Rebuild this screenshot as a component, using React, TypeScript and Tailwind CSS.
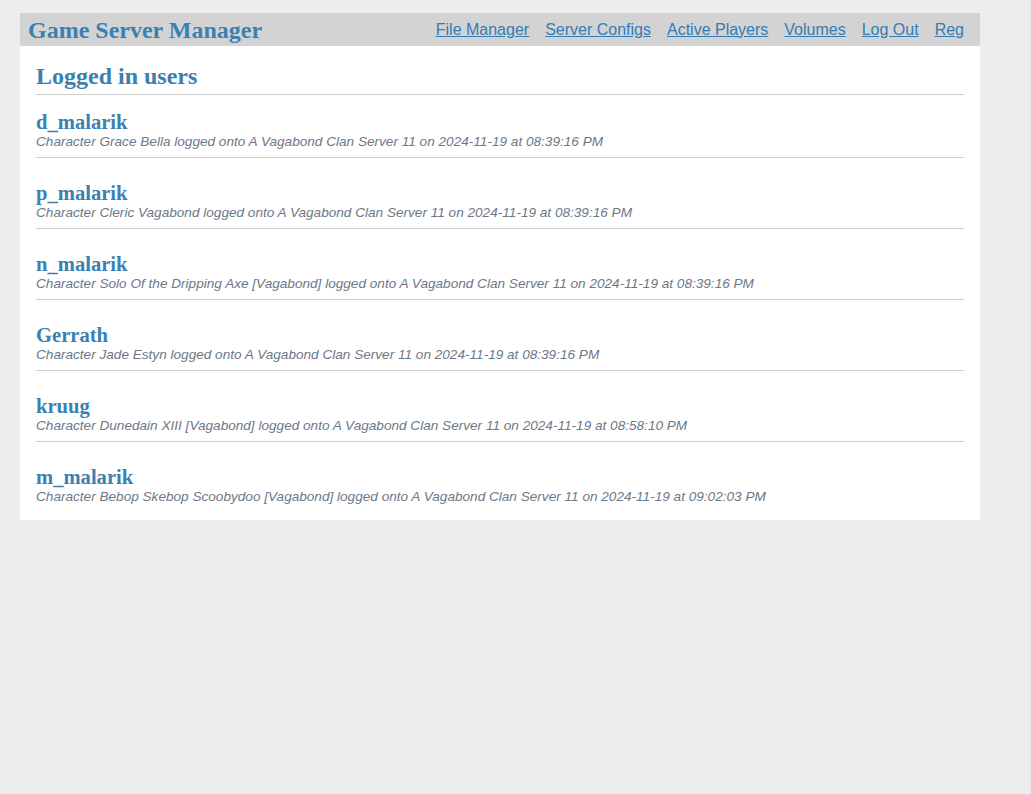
import React from 'react';

const serif = { fontFamily: '"Liberation Serif", "Times New Roman", serif' };

const navLinks = ['File Manager', 'Server Configs', 'Active Players', 'Volumes', 'Log Out', 'Reg'];

const users = [
  { name: 'd_malarik', text: 'Character Grace Bella logged onto A Vagabond Clan Server 11 on 2024-11-19 at 08:39:16 PM' },
  { name: 'p_malarik', text: 'Character Cleric Vagabond logged onto A Vagabond Clan Server 11 on 2024-11-19 at 08:39:16 PM' },
  { name: 'n_malarik', text: 'Character Solo Of the Dripping Axe [Vagabond] logged onto A Vagabond Clan Server 11 on 2024-11-19 at 08:39:16 PM' },
  { name: 'Gerrath', text: 'Character Jade Estyn logged onto A Vagabond Clan Server 11 on 2024-11-19 at 08:39:16 PM' },
  { name: 'kruug', text: 'Character Dunedain XIII [Vagabond] logged onto A Vagabond Clan Server 11 on 2024-11-19 at 08:58:10 PM' },
  { name: 'm_malarik', text: 'Character Bebop Skebop Scoobydoo [Vagabond] logged onto A Vagabond Clan Server 11 on 2024-11-19 at 09:02:03 PM' },
];

const App: React.FC = () => {
  return (
    <div className="min-h-[794px] w-full bg-[#ececec] pt-[13px] pl-[20px]" style={{ fontFamily: '"Liberation Sans", Arial, sans-serif' }}>
      <div className="w-[960px]">
        <div className="h-[33px] bg-[#d3d3d3] flex items-center justify-between pl-2 pr-4">
          <h1 className="text-[24px] font-bold text-[#3a80b0] leading-none" style={serif}>
            Game Server Manager
          </h1>
          <nav className="flex items-center gap-4">
            {navLinks.map((l) => (
              <a key={l} href="#" className="text-[16px] text-[#347cb6] underline">
                {l}
              </a>
            ))}
          </nav>
        </div>

        <div className="bg-white px-4 pt-[16px] pb-[8px]">
          <h2 className="text-[24px] font-bold text-[#3a80b0] leading-[28px] pb-[4px] border-b border-[#cfcfcf]" style={serif}>
            Logged in users
          </h2>
          {users.map((u, i) => {
            const last = i === users.length - 1;
            return (
              <div
                key={u.name}
                className={last ? 'pt-[16px] pb-[7px]' : 'pt-[16px] pb-[7px] mb-2 border-b border-[#cfcfcf]'}
              >
                <div className="text-[20.6px] font-bold text-[#3a80b0] leading-[23px]" style={serif}>
                  {u.name}
                </div>
                <div className="text-[13.6px] italic text-[#6c7888] leading-[16px]">{u.text}</div>
              </div>
            );
          })}
        </div>
      </div>
    </div>
  );
};

export default App;
